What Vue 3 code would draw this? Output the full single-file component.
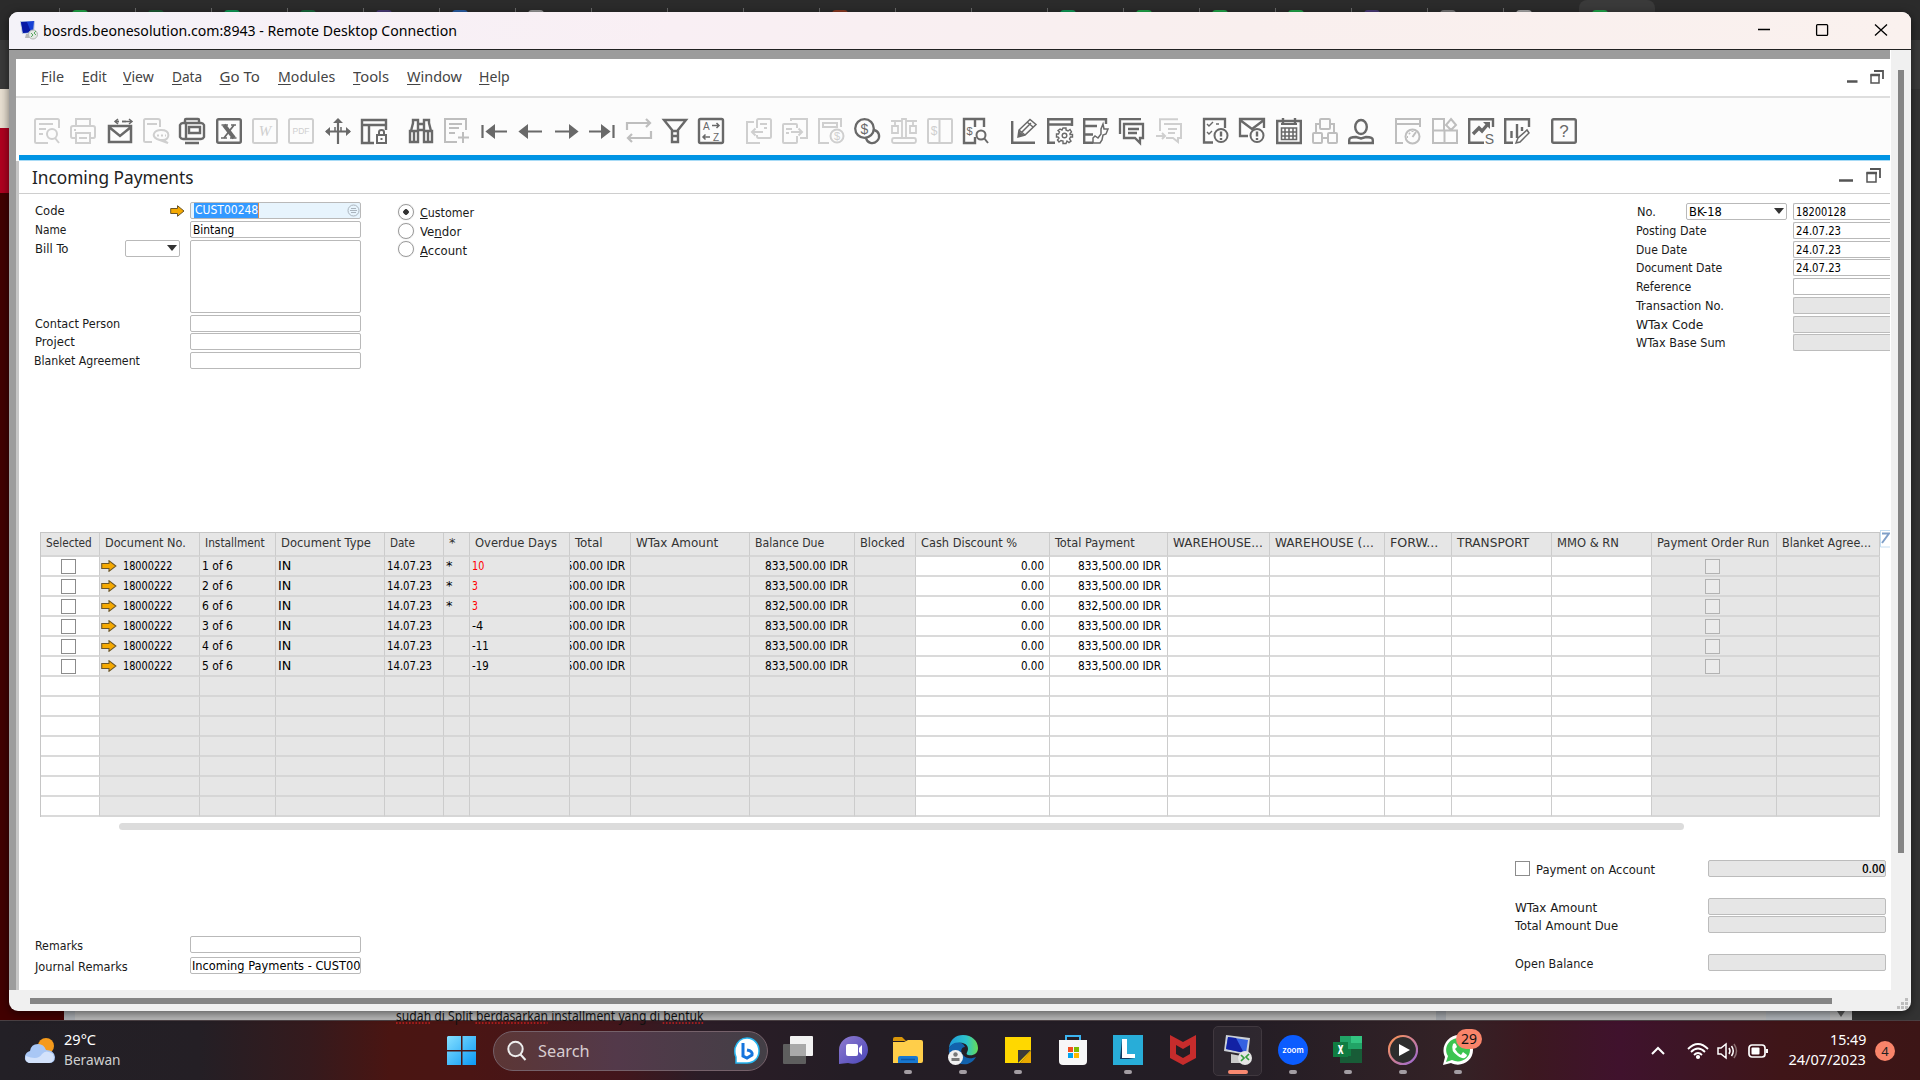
<script setup>
// Scales a label horizontally to the given width in px
const vFit = {
  mounted(el, { value, modifiers }) {
    const natural = el.offsetWidth
    if (!value || !natural) return
    el.style.transformOrigin = modifiers.right ? 'right center' : 'left center'
    el.style.transform = `scaleX(${value / natural})`
  },
}

const tabs = ['#20a84a', '#1c5c34', '#0f9d58', '#17693c', '#4b3a78', '#2a5fa8', '#9a9a9a', '', '', '', '#8c3a22', '', '', '#0f9d58', '#20a84a', '#20a84a', '#20a84a', '#4b3a78', '#777', '#aaa', '#20a84a']

const menus = [
  ['F', 'ile', 23, 41], ['E', 'dit', 25, 41], ['V', 'iew', 31, 48.5], ['D', 'ata', 30, 48], ['G', 'o To', 40, 58],
  ['M', 'odules', 57.5, 75], ['T', 'ools', 36.5, 54], ['W', 'indow', 55, 72.5], ['H', 'elp', 31, 40],
]

const toolGroups = [
  [
    [0, '<path d="M25 10V2.500Q25 1 23.500 1H2.500Q1 1 1 2.500V23.500Q1 25 2.500 25H14M5 6H19M5 11H12M5 16H9"/><circle cx="18" cy="16" r="5"/><path d="M21 20L25 25"/>'],
    [0, '<path d="M6 8V1H20V8M6 20H2.500Q1 20 1 18V10Q1 8 3 8H23Q25 8 25 10V18Q25 20 23.500 20H20M6 15H20V25H6ZM9 20H17M4 12H6"/>'],
    [1, '<path d="M2 8H24V24H2ZM2 9L13 18L24 9" stroke-width="2.500"/><path d="M8 3.500H12M15 3.500H19" stroke-width="1.500"/><path d="M8 3.500H12M11 1L8 3.500L11 6M15 3.500H25M22 1L25 3.500L22 6" stroke-width="1.500"/>'],
    [0, '<path d="M17 9V3Q17 1 15 1H2.500Q1 1 1 2.500V22.500Q1 24 2.500 24H9M4 6H14"/><path d="M18 12C28 12 27 22 20 22L25 25L14 21C8 18 11 12 18 12ZM14 17.500H16M18 17.500H20M22 17.500H23"/>'],
    [1, '<path d="M6 5V2Q6 1 7 1H19Q20 1 20 2V5M4 5H22Q24 5 25 7V19Q24 21 22 21H4Q2 21 1 19V7Q2 5 4 5ZM7 5V21M10 9H21V15H10ZM6 25H20" stroke-width="2.400"/>'],
    [1, '<rect x="1.200" y="1.200" width="23.600" height="23.600" rx="1.500" stroke-width="2.400"/><path d="M8 7L18 20" stroke-width="4"/><path d="M18 7L8 20" stroke-width="1.800"/><path d="M5.500 7H12M15 7H20M5 20H11M14 20H20.500" stroke-width="1.500"/>'],
    [0, '<rect x="1" y="1" width="24" height="24" rx="1.500"/><text x="13" y="18" text-anchor="middle" font-family="Liberation Serif,serif" font-style="italic" font-size="15" fill="currentColor" stroke="none">W</text>'],
    [0, '<rect x="1" y="1" width="24" height="24" rx="1.500"/><text x="13" y="16" text-anchor="middle" font-family="Liberation Sans,sans-serif" font-size="8.500" fill="currentColor" stroke="none">PDF</text>'],
    [1, '<path d="M13 1V26M1 13.500H25" stroke-width="2.200"/><path d="M8 5H18L13 0ZM5 9V18L0 13.500ZM21 9V18L26 13.500Z" fill="currentColor" stroke="none"/><path d="M10 14V9M16 14V9" stroke-width="1.500"/>'],
    [1, '<path d="M25 12V2H1V25H13M1 7H25M8 7V25" stroke-width="2.400"/><rect x="16" y="17" width="9" height="8"/><path d="M18 17V14Q18 12 20.500 12T23 14V17M20.500 20V22"/>'],
  ],
  [
    [1, '<path d="M3 13L5 5V2H10V13M23 13L21 5V2H16V13M10 6H16M10 12H16M2 13H10V24H2ZM16 13H24V24H16ZM6 13V24M20 13V24" stroke-width="2.400"/>'],
    [0.6, '<path d="M22 12V1H1V24H13M5 6H18M5 10H15M5 15H11M19 14V25M14 19.500H25"/>'],
    [1, '<path d="M1.500 7V20M7 13.500H26" stroke-width="2.200"/><path d="M6 13.500L13 8V19Z" fill="currentColor"/>'],
    [1, '<path d="M4 13.500H25" stroke-width="2.200"/><path d="M3 13.500L10 8V19Z" fill="currentColor"/>'],
    [1, '<path d="M2 13.500H22" stroke-width="2.200"/><path d="M24 13.500L17 8V19Z" fill="currentColor"/>'],
    [1, '<path d="M0 13.500H19M24.500 7V20" stroke-width="2.200"/><path d="M20 13.500L13 8V19Z" fill="currentColor"/>'],
    [0.6, '<path d="M1 12V5H24M20 1L24 5L20 9M25 13V20H2M6 16L2 20L6 24" stroke-width="2.200"/>'],
    [1, '<path d="M2 2H24L16 12V24H10V12ZM10 13H16M10 18H16" stroke-width="2.400"/>'],
    [1, '<rect x="1" y="1" width="24" height="24" rx="1.500" stroke-width="2.400"/><path d="M14 7.500H21M18.500 5L21 7.500L18.500 10M12 19H5M7.500 16.500L5 19L7.500 21.500" stroke-width="1.500"/><text x="5" y="12" font-family="Liberation Sans,sans-serif" font-size="10" fill="currentColor" stroke="none">A</text><text x="15" y="22.500" font-family="Liberation Sans,sans-serif" font-size="10" fill="currentColor" stroke="none">Z</text>'],
  ],
  [
    [0, '<path d="M8 4H1V25H14M11 10V2.500Q11 1 12.500 1H23.500Q25 1 25 2.500V18.500Q25 20 23.500 20H12.500Q11 20 11 18V17M14 6H21M18 10H21M6 14H17M9.500 10.500L6 14L9.500 17.500"/>'],
    [0, '<path d="M15 10V7Q15 6 14 6H2Q1 6 1 7V24Q1 25 2 25H14Q15 25 15 24V18M9 3V1H25V20H18M4 11H10M4 15H7M9 14H20M16.500 10.500L20 14L16.500 17.500"/>'],
    [0, '<path d="M23 9V1H1V25H11M5 5H19V9H5Z"/><circle cx="19" cy="18" r="6.500"/><text x="19" y="22" text-anchor="middle" font-family="Liberation Sans,sans-serif" font-size="11" fill="currentColor" stroke="none">$</text>'],
    [1, '<circle cx="10.500" cy="10.500" r="9.300" stroke-width="2.300"/><path d="M20 12C25 13 27 19 23 23C19 27 13 25 12 20" stroke-width="2.300"/><text x="10.500" y="15.500" text-anchor="middle" font-family="Liberation Sans,sans-serif" font-size="14" fill="currentColor" stroke="none">$</text>'],
    [0, '<path d="M0 3H11M15 3H26M4 3V8M22 3V8M1 8H7V15H1ZM19 8H25V15H19ZM11 20V1H15V20M3 20H23Q25 20 25 22.500T23 25H3Q1 25 1 22.500T3 20Z" stroke-width="1.800"/>'],
    [0, '<path d="M2 1H24Q25 1 25 2V24Q25 25 24 25H2Q1 25 1 24V2Q1 1 2 1ZM12.500 1V25"/><text x="7" y="17" text-anchor="middle" font-family="Liberation Sans,sans-serif" font-size="12" fill="currentColor" stroke="none">$</text>'],
    [1, '<path d="M21 9V1H1V25H12V19M12 1V9" stroke-width="2.400"/><circle cx="18" cy="17" r="4.500"/><path d="M21 20L25 25"/><text x="6.500" y="16.500" text-anchor="middle" font-family="Liberation Sans,sans-serif" font-size="11" fill="currentColor" stroke="none">$</text>'],
  ],
  [
    [1, '<path d="M1.200 3V24.800H24" stroke-width="2.400"/><path d="M7 19L8 12L19 1.500L25 6.500L14 17ZM8 12L14 17M16 4L22 9M11 14L20 5" stroke-width="1.500"/><path d="M7 19L8 13L13 17Z" fill="currentColor" stroke="none"/>'],
    [1, '<path d="M25 8V1.200H1.200V24.800H8M1 6.500H25" stroke-width="2.400"/><circle cx="17.500" cy="17.500" r="2.300" stroke-width="1.400"/><path d="M16 10H19V12L21 13L23 11.500L24.500 14L23 15.500V16.500H25.500V19H23.500L22.500 21L24 23L22 24.500L20 23L19 25.500H16V23L14 22.500L12 24L10.500 22L12 20L11 19H9.500V16H11.500L12.500 14L11 12.500L13 11L15 12Z" stroke-width="1.400"/>'],
    [1, '<path d="M23 6V1.200H1.200V24.800H10M1 8H14M1 16.500H10" stroke-width="2.400"/><path d="M10 25V20L12 18L15 20L18 16L18 11L20 6L21 11H25L23 16L20 17L19 22L17 25Z" stroke-width="1.500"/>'],
    [1, '<path d="M1 16V1.200H22M5 6H24V20H21V25L16 20H5ZM9 11H20M9 15H18" stroke-width="2.300"/>'],
    [0, '<path d="M4 13V1.200H22M8 6H25V20H22V24L17 20H10M12 11H21M12 15H19M0 18H9M6 15L9 18L6 21"/>'],
  ],
  [
    [1, '<path d="M22 10V1H1V24.500H10" stroke-width="2.300"/><path d="M4 6L6 8L10 4M4 14L6 16L9 13M13 6H16" stroke-width="1.400"/><circle cx="18" cy="17.500" r="6.500"/><path d="M18 13.500V18.500M18 20V22" stroke-width="2.400"/>'],
    [1, '<path d="M25 10V1H1V18H9M1 2L13 11L25 2" stroke-width="2.300"/><circle cx="18" cy="17.500" r="6.500"/><path d="M18 13.500V18.500M18 20V22" stroke-width="2.400"/>'],
    [1, '<path d="M1.200 3H24.800V25H1.200ZM7 0V5M19 0V5" stroke-width="2.400"/><path d="M5 6H21" stroke-width="2"/><path d="M5.500 10H20.500V21.500H5.500ZM5 14H21M5 18H21M9 10V22M13 10V22M17 10V22" stroke-width="1.600"/>'],
    [0.6, '<rect x="8" y="1" width="10" height="10" rx="1"/><rect x="1" y="15" width="9" height="10" rx="1"/><rect x="16" y="15" width="9" height="10" rx="1"/><path d="M8 6H4V15M18 6H22V15M10 20H16"/>'],
    [1, '<ellipse cx="13" cy="9" rx="5.800" ry="7" stroke-width="2.400"/><path d="M1.200 25V22Q1.200 19 8 19L13 20.500L18 19Q24.800 19 24.800 22V25Z" stroke-width="2.400"/>'],
  ],
  [
    [0.6, '<path d="M25 9V1H1V25H8M1 6H25"/><circle cx="17.500" cy="18.500" r="7"/><path d="M17.500 19L21 14M12 19H13M17.500 13V14M14 15L15 16"/>'],
    [0.6, '<path d="M1 1H12V12.500H1ZM1 12.500H12.500V25H1ZM12.500 12.500H25V25H12.500ZM19 1L24 7L19 12L14 7Z"/>'],
    [1, '<path d="M25 9V1.200H1.200V24.800H16" stroke-width="2.400"/><path d="M5 16L11 10L14 13L20 6" stroke-width="3.400"/><path d="M15 4H22V11Z" fill="currentColor" stroke="none"/><text x="21.500" y="25.500" text-anchor="middle" font-family="Liberation Sans,sans-serif" font-size="14" fill="currentColor" stroke="none">S</text>'],
    [1, '<path d="M25 9V1.200H1.200V24.800H9" stroke-width="2.400"/><path d="M7.500 13V20M13 6V20M18 9V13" stroke-width="2.400"/><path d="M12 25L14 20L23 12L25 15L16 24Z" stroke-width="1.500"/>'],
  ],
  [
    [1, '<rect x="1.200" y="1.200" width="23.600" height="23.600" rx="1.500" stroke-width="2.400"/><text x="13" y="19" text-anchor="middle" font-family="Liberation Sans,sans-serif" font-size="17" fill="currentColor" stroke="none">?</text>'],
  ],
]

// label, width, first grid row
const leftFields = [
  ['Code', 30, 1], ['Name', 31.5, 2], ['Bill To', 33.5, 3],
  ['Contact Person', 85.5, 7], ['Project', 40, 8], ['Blanket Agreement', 106, 9],
]
const parties = [['', 'C', 'ustomer', 53.5], ['Ve', 'n', 'dor', 41.5], ['', 'A', 'ccount', 47.5]]
const rightFields = [
  { label: 'No.', w: 19, value: '18200128', vw: 50 },
  { label: 'Posting Date', w: 70, value: '24.07.23', vw: 45 },
  { label: 'Due Date', w: 51, value: '24.07.23', vw: 45 },
  { label: 'Document Date', w: 86, value: '24.07.23', vw: 45 },
  { label: 'Reference', w: 55 },
  { label: 'Transaction No.', w: 88, off: true },
  { label: 'WTax Code', w: 67, off: true },
  { label: 'WTax Base Sum', w: 90, off: true },
]

const columns = [
  ['Selected', 46, 0], ['Document No.', 80.5, 1], ['Installment', 60, 1], ['Document Type', 90, 1], ['Date', 25, 1],
  ['*', 6, 1], ['Overdue Days', 81.5, 1], ['Total', 27.5, 1], ['WTax Amount', 82, 1], ['Balance Due', 69, 1],
  ['Blocked', 44.5, 1], ['Cash Discount %', 96, 0], ['Total Payment', 80, 0], ['WAREHOUSE...', 89.5, 0],
  ['WAREHOUSE (...', 99, 0], ['FORW...', 48, 0], ['TRANSPORT', 72, 0], ['MMO & RN', 62, 0],
  ['Payment Order Run', 112, 1], ['Blanket Agree...', 89, 1],
]
const payments = [
  ['1 of 6', '*', '10', 12.5, '833,500.00 IDR'], ['2 of 6', '*', '3', 6, '833,500.00 IDR'], ['6 of 6', '*', '3', 6, '832,500.00 IDR'],
  ['3 of 6', '', '-4', 11.5, '833,500.00 IDR'], ['4 of 6', '', '-11', 17, '833,500.00 IDR'], ['5 of 6', '', '-19', 17, '833,500.00 IDR'],
]
// Text and width of one grid cell, or null when it is empty
function cell(r, c) {
  const p = payments[r]
  if (!p) return null
  switch (c) {
    case 1: return ['18000222', 49.5]
    case 2: return [p[0], 31]
    case 3: return ['IN', 13]
    case 4: return ['14.07.23', 45]
    case 5: return p[1] ? ['*', 6] : null
    case 6: return [p[2], p[3]]
    case 7: case 9: case 12: return [p[4], 83]
    case 11: return ['0.00', 23]
    default: return null
  }
}
const isRight = (c) => [7, 9, 11, 12].includes(c)

const apps = [
  { name: 'task-view', svg: '<rect x="0" y="10" width="23" height="20" rx="1" fill="#5e5e5e"/><rect x="7" y="2" width="23" height="20" rx="1" fill="#f2f2f2"/><path d="M7 10H23V22H7Z" fill="#a9a9a9"/>' },
  { name: 'chat', svg: '<defs><linearGradient id="ch" x1="0" y1="0" x2="1" y2="1"><stop offset="0" stop-color="#8f7bd0"/><stop offset="1" stop-color="#4a46b8"/></linearGradient></defs><path d="M16 2C8 2 1 8 1 16L1 30L10 29C20 32 30 25 30 16C30 8 24 2 16 2Z" fill="url(#ch)"/><rect x="8" y="10" width="12" height="12" rx="2" fill="#fff"/><path d="M21 14L24 11V21L21 18Z" fill="#fff"/>' },
  { name: 'explorer', dot: 1, svg: '<path d="M0 5Q0 3 2 3H9L13 7H0Z" fill="#d9960a"/><path d="M0 8H11L15 6H28Q30 6 30 8V27Q30 29 28 29H0Z" fill="#ffce4a"/><path d="M5 29V24Q5 22 7 22H23Q25 22 25 24V29Z" fill="#1878d0"/><path d="M8 25.500H22" stroke="#0b57a8" stroke-width="1.500"/>' },
  { name: 'edge', dot: 1, svg: '<defs><linearGradient id="ed" x1="0" x2="1"><stop offset="0" stop-color="#1f9bdc"/><stop offset=".6" stop-color="#2dc3cb"/><stop offset="1" stop-color="#67dc55"/></linearGradient></defs><path d="M1 14C2 5 8 1 15 1C24 1 30 7 30 14C30 20 25 22 20 21C17 20 20 18 20 15C20 10 15 8 10 9C6 9 3 11 1 14Z" fill="url(#ed)"/><path d="M1 14C5 7 15 7 17 13C13 13 12 18 15 21C19 26 25 24 28 23C24 30 17 32 10 29C3 27 0 20 1 14Z" fill="#1262ad"/><circle cx="7.500" cy="23.500" r="7.500" fill="#f0f0f0"/><circle cx="7.500" cy="20.500" r="2.200" fill="#777"/><path d="M3.500 27V24H11.500V27Z" fill="#777"/>' },
  { name: 'notes', dot: 1, svg: '<path d="M2 3H28V17L17 29H2Z" fill="#ffd800"/><path d="M15 29V16H28Z" fill="#3b3a39"/><path d="M17 29L28 17V29Z" fill="#e8a800"/>' },
  { name: 'store', svg: '<path d="M8 8V2H22V8" fill="none" stroke="#3cb4f0" stroke-width="2"/><path d="M1 6H29V27Q29 31 25 31H5Q1 31 1 27Z" fill="#f7f7f7"/><path d="M10 13H15V18H10Z" fill="#f25022"/><path d="M16 13H21V18H16Z" fill="#7fba00"/><path d="M10 19H15V24H10Z" fill="#00a4ef"/><path d="M16 19H21V24H16Z" fill="#ffb900"/>' },
  { name: 'lingo', dot: 1, svg: '<rect x="0" y="1" width="30" height="30" fill="#28add8"/><path d="M9 5L7 25L22 25L9 23Z" fill="#103a5e"/><path d="M9 5H14V20H22V24H9Z" fill="#fff"/>' },
  { name: 'shield', svg: '<path d="M2 1L15 8L28 1V24L15 31L2 24Z" fill="#c62c2c"/><path d="M8 11L15 15L22 11V20L15 24L8 20Z" fill="#241d24"/>' },
  { name: 'remote', active: 1, svg: '<path d="M3 1L27 4L25 21L1 17Z" fill="#c9ced6"/><path d="M5 3L25 6L23 19L3 15Z" fill="#2a5ae0"/><path d="M5 3L13 4L21 19L3 15Z" fill="#0717a0"/><path d="M8 20L18 22L22 29H8Z" fill="#c8c8c8"/><circle cx="22" cy="24" r="7" fill="#e4e4e4"/><path d="M18 21L21 24L18 27M26 20L23 23L26 26" stroke="#2c9a35" stroke-width="1.700" fill="none"/>' },
  { name: 'zoom', dot: 1, svg: '<circle cx="15" cy="16" r="15" fill="#0b5cff"/><text x="15" y="18.500" text-anchor="middle" font-family="Inter,sans-serif" font-weight="600" font-size="8" fill="#fff">zoom</text>' },
  { name: 'sheet', dot: 1, svg: '<rect x="7" y="2" width="22" height="27" fill="#185c37"/><path d="M7 2H18V15H7Z" fill="#21a366"/><path d="M18 2H29V9H18Z" fill="#33c481"/><path d="M18 9H29V15H18Z" fill="#21a366"/><path d="M7 15H18V22H7Z" fill="#107c41"/><rect x="0" y="8" width="15" height="15" fill="#107c41"/><text x="7.500" y="20" text-anchor="middle" font-family="Open Sans,sans-serif" font-weight="700" font-size="12" fill="#fff">X</text>' },
  { name: 'player', dot: 1, svg: '<defs><linearGradient id="pl" x1="0" y1="0" x2="1" y2="1"><stop offset="0" stop-color="#ff9550"/><stop offset="1" stop-color="#9a68d8"/></linearGradient></defs><circle cx="15" cy="16" r="14" fill="#2d2d2d" stroke="url(#pl)" stroke-width="2.200"/><path d="M11 10L22 16L11 22Z" fill="#fff"/>' },
  { name: 'phone', dot: 1, badge: '29', svg: '<path d="M0 31L2 23C-3 13 5 1 16 1C24 1 30 8 30 16C30 27 18 34 8 29Z" fill="#fff"/><path d="M3 28L5 22C0 14 6 4 16 4C23 4 27 10 27 16C27 25 17 30 9 26Z" fill="#3cc451"/><path d="M10 10C12 8 13 10 14 13L12 15Q14 19 18 21L20 18L24 21C23 25 19 25 15 22Q7 17 10 10Z" fill="#fff"/>' },
]
</script>

<template>
  <div class="desktop">
    <div class="browser-tabs">
      <div v-for="(t, i) in tabs" :key="i" class="tab" :class="{ current: i === 20 }">
        <i :style="{ background: t || 'transparent' }"></i>
      </div>
    </div>
    <div class="browser-bar"></div>
    <div class="page-cream"></div>
    <div class="page-red"></div>
    <div class="page-dark"></div>
    <div class="word-strip">
      <div class="paper">
        <span v-fit="308" class="doc-text"><u>sudah</u> di Split <u>berdasarkan</u> installment yang di <u>bentuk</u></span>
        <b class="caret"></b>
      </div>
    </div>

    <footer class="taskbar">
      <div class="weather">
        <svg width="32" height="30" viewBox="0 0 32 30">
          <circle cx="22" cy="10" r="8" fill="#f59a1b" />
          <path d="M6 27Q0 26 1 20Q2 16 6 15Q7 8 14 8Q20 8 22 14Q30 14 31 21Q31 27 25 27Z" fill="#a9c7f5" />
          <path d="M5 27Q0 25 2 20Q14 25 18 18Q22 13 29 18Q32 26 25 27Z" fill="#d3e2fb" />
        </svg>
        <div class="forecast">
          <div><span v-fit="32">29°C</span></div>
          <div class="dim"><span v-fit="56.5">Berawan</span></div>
        </div>
      </div>
      <svg class="start" width="30" height="30" viewBox="0 0 30 30">
        <defs><linearGradient id="win" x1="0" y1="0" x2="1" y2="1"><stop offset="0" stop-color="#86e0ff" /><stop offset="1" stop-color="#0a98f5" /></linearGradient></defs>
        <path d="M1 0H14V14H0V1ZM15.500 0H29V14H15.500ZM0 15.500H14V29H0ZM15.500 15.500H29V29H15.500Z" fill="url(#win)" />
      </svg>
      <div class="search">
        <svg width="20" height="22" viewBox="0 0 20 22" fill="none" stroke="#eee" stroke-width="2"><circle cx="8.500" cy="9" r="7.200" fill="#6d5558" /><path d="M13.500 14.500L18.500 20" /></svg>
        <span v-fit="52">Search</span>
        <svg class="bing" width="26" height="28" viewBox="0 0 26 28"><path d="M13 1C20 1 25 7 25 14C25 21 20 26 13 26H2L2 20C0 16 1 13 1 11C3 5 7 1 13 1Z" fill="#fff" stroke="#25b4ee" stroke-width="1.500" /><path d="M9 6V19L13 21L18 18Q19 14 13 13" fill="none" stroke="#1675dd" stroke-width="3" /></svg>
      </div>
      <div class="apps">
        <div v-for="a in apps" :key="a.name" class="app" :class="{ active: a.active }">
          <svg width="30" height="32" viewBox="0 0 30 32" v-html="a.svg"></svg>
          <i v-if="a.dot || a.active" class="dot"></i>
          <span v-if="a.badge" class="count">{{ a.badge }}</span>
        </div>
      </div>
      <div class="tray">
        <svg width="16" height="12" viewBox="0 0 16 12" fill="none" stroke="#fff" stroke-width="2"><path d="M2 9L8 3L14 9" /></svg>
        <svg class="wifi" width="22" height="18" viewBox="0 0 22 18" fill="none" stroke="#fff" stroke-width="1.800"><path d="M1 7Q11 -3 21 7M4 10Q11 3 18 10M7 13Q11 9 15 13" /><circle cx="11" cy="15" r="1.200" fill="#fff" /></svg>
        <svg class="vol" width="21" height="18" viewBox="0 0 21 18" fill="none" stroke="#fff" stroke-width="1.500"><path d="M1 6H4L9 2V16L4 12H1ZM12 6Q14 9 12 12M14.500 4Q18 9 14.500 14" /><path d="M17 2Q22 9 17 16" stroke="#8a6f70" /></svg>
        <svg class="bat" width="21" height="14" viewBox="0 0 21 14"><rect x="1" y="1" width="16" height="12" rx="3" fill="none" stroke="#fff" stroke-width="1.700" /><rect x="3.500" y="3.500" width="8" height="7" rx="1" fill="#fff" /><path d="M18 5H20V9H18Z" fill="#fff" /></svg>
        <div class="clock">
          <div><span v-fit.right="36">15:49</span></div>
          <div><span v-fit.right="77.500">24/07/2023</span></div>
        </div>
        <span class="notif">4</span>
      </div>
    </footer>

    <section class="window">
      <header class="titlebar">
        <svg width="20" height="20" viewBox="0 0 20 20"><path d="M1 1L16 1L15 13L3 14Z" fill="#b9c4dc" /><path d="M2 2L15 1L14 12L4 13Z" fill="#1740d5" /><path d="M2 2L8 2L12 12L4 13Z" fill="#0718a5" /><path d="M7 14H12V18H6Z" fill="#b8b8b8" /><circle cx="14" cy="14.500" r="4.500" fill="#e4e8e4" stroke="#b0b4b0" /><path d="M12 13L14 15L12 17M17 11L15 13L17 15" stroke="#5aa862" fill="none" /></svg>
        <span v-fit="414" class="title">bosrds.beonesolution.com:8943 - Remote Desktop Connection</span>
        <svg class="controls" width="130" height="14" viewBox="0 0 130 14" fill="none" stroke="#000" stroke-width="1.300"><path d="M0 6.500H12M117 1.500L129 12.500M129 1.500L117 12.500" /><rect x="58.600" y="1.600" width="11" height="10.800" rx="1" /></svg>
      </header>
      <div class="session">
        <div class="screen">
          <div class="gray-top"></div>
          <nav class="menubar">
            <span v-for="m in menus" :key="m[1]" class="menu" :style="{ width: m[3] + 'px' }"><span v-fit="m[2]"><u>{{ m[0] }}</u>{{ m[1] }}</span></span>
            <svg class="mdi" width="37" height="14" viewBox="0 0 37 14" fill="none" stroke="#555"><path d="M0 11.500H10.500" stroke-width="2.500" /><path d="M27 1H36V9" stroke-width="1.800" /><path d="M24 5H32V13H24Z" stroke-width="1.500" /><path d="M23.500 5H33" stroke-width="2.500" /></svg>
          </nav>
          <div class="toolbar">
            <div v-for="(g, i) in toolGroups" :key="i" class="tools">
              <span v-for="(t, j) in g" :key="j" class="tool" :class="{ off: t[0] === 0, half: t[0] === 0.6 }"><svg width="26" height="26" viewBox="0 0 26 26" v-html="t[1]"></svg></span>
            </div>
          </div>
          <div class="blue-line"></div>
          <main class="form">
            <div class="form-title">
              <span v-fit="162">Incoming Payments</span>
              <svg class="mdi" width="43" height="15" viewBox="0 0 43 15" fill="none" stroke="#555"><path d="M0 12.500H14" stroke-width="2.500" /><path d="M31 1H41V10" stroke-width="1.800" /><path d="M28 5H37V14H28Z" stroke-width="1.500" /><path d="M27.500 5H38" stroke-width="2.500" /></svg>
            </div>
            <div class="header-fields">
              <div class="left-grid">
                <div v-for="(f, i) in leftFields" :key="f[0]" class="lrow" :style="{ gridRow: f[2] }">
                  <label :class="{ out: i === 5 }"><span v-fit="f[1]">{{ f[0] }}</span></label>
                  <div class="aux">
                    <svg v-if="i === 0" class="link" width="15" height="12" viewBox="0 0 15 12"><path d="M.700 3.500H7.500V.700L14 6L7.500 11.300V8.500H.700Z" fill="#f5a900" stroke="#6b5526" /></svg>
                    <div v-if="i === 2" class="combo small"><b></b></div>
                  </div>
                  <div v-if="i === 0" class="box focus"><span class="sel"><span v-fit="63">CUST00248</span></span><svg width="13" height="13" viewBox="0 0 13 13" fill="none" stroke="#aab4bd"><circle cx="6.500" cy="6.500" r="5.500" /><path d="M4 4.500H9M3 6.500H10M4 8.500H9" /></svg></div>
                  <div v-else-if="i === 2" class="box area"></div>
                  <div v-else class="box"><span v-if="i === 1" v-fit="41.500">Bintang</span></div>
                </div>
              </div>
              <div class="radios">
                <div v-for="(p, i) in parties" :key="i" class="radio"><i :class="{ on: i === 0 }"></i><span v-fit="p[3]">{{ p[0] }}<u>{{ p[1] }}</u>{{ p[2] }}</span></div>
              </div>
              <div class="right-fields">
                <div v-for="(f, i) in rightFields" :key="f.label" class="rrow">
                  <label><span v-fit="f.w">{{ f.label }}</span></label>
                  <div v-if="i === 0" class="combo"><span v-fit="33">BK-18</span><b></b></div>
                  <div class="box cut" :class="{ disabled: f.off }"><span v-if="f.value" v-fit="f.vw">{{ f.value }}</span></div>
                </div>
              </div>
            </div>
            <div class="matrix">
              <div class="grid">
                <div v-for="(c, i) in columns" :key="'h' + i" class="th"><span v-fit="c[1]">{{ c[0] }}</span></div>
                <template v-for="r in 13" :key="r">
                  <div v-for="(c, i) in columns" :key="r + '-' + i" class="td" :class="['c' + i, { gray: c[2], right: isRight(i), late: i === 6 && r < 4 }]">
                    <i v-if="(i === 0 || i === 18) && r <= 6" class="check" :class="{ dis: i === 18 }"></i>
                    <svg v-if="i === 1 && r <= 6" width="16" height="12" viewBox="0 0 15 12" preserveAspectRatio="none"><path d="M.700 3.500H7.500V.700L14 6L7.500 11.300V8.500H.700Z" fill="#f5a900" stroke="#6b5526" /></svg>
                    <span v-if="cell(r - 1, i) && isRight(i)" v-fit.right="cell(r - 1, i)[1]">{{ cell(r - 1, i)[0] }}</span>
                    <span v-else-if="cell(r - 1, i)" v-fit="cell(r - 1, i)[1]">{{ cell(r - 1, i)[0] }}</span>
                  </div>
                </template>
              </div>
              <svg class="expand" width="10" height="18" viewBox="0 0 10 18" fill="none"><path d="M0 .500H10M.500 0V17H10" stroke="#c3dcf0" /><path d="M2 3.500H9L2 13" stroke="#7f9fc8" stroke-width="2" /></svg>
            </div>
            <div class="hscroll"></div>
            <div class="bottom">
              <div class="remarks">
                <div class="brow"><label><span v-fit="48">Remarks</span></label><div class="box"></div></div>
                <div class="brow"><label><span v-fit="93">Journal Remarks</span></label><div class="box tight"><span v-fit="168">Incoming Payments - CUST00</span></div></div>
              </div>
              <div class="totals">
                <div class="trow"><i class="check"></i><label><span v-fit="119">Payment on Account</span></label><div class="box disabled amount"><span v-fit.right="23">0.00</span></div></div>
                <div class="trow gap"><label><span v-fit="82">WTax Amount</span></label><div class="box disabled"></div></div>
                <div class="trow"><label><span v-fit="103">Total Amount Due</span></label><div class="box disabled"></div></div>
                <div class="trow gap"><label><span v-fit="78">Open Balance</span></label><div class="box disabled"></div></div>
              </div>
            </div>
          </main>
        </div>
        <div class="vbar"><i></i></div>
      </div>
      <div class="hbar"><i></i>
        <svg width="12" height="12" viewBox="0 0 12 12" fill="#bdbdbd"><path d="M8 0H11V3H8ZM4 4H7V7H4ZM8 4H11V7H8ZM0 8H3V11H0ZM4 8H7V11H4ZM8 8H11V11H8Z" /></svg>
      </div>
    </section>
  </div>
</template>

<style>
body { margin: 0; background: #2b2b2b; overflow: hidden; }
</style>

<style scoped>
* { box-sizing: border-box; }
.desktop { position: relative; width: 1920px; height: 1080px; overflow: hidden; display: flex; flex-direction: column; font-family: "DejaVu Sans Condensed", "DejaVu Sans", sans-serif; font-stretch: condensed; font-size: 12px; color: #1a1a1a; background: linear-gradient(#2b2b2b 40px, #333 40px); }
.desktop span { display: inline-block; flex: none; white-space: nowrap; }

.browser-tabs { height: 40px; padding-left: 59px; display: flex; background: #2b2b2b; flex: none; }
.tab { width: 76px; height: 12px; flex: none; padding: 10px 0 0 13px; background: linear-gradient(#6a6a6a, #6a6a6a) 0 8px / 1px 4px no-repeat; }
.tab.current { background: #3a3a3a; border-radius: 8px 8px 0 0; }
.tab i { display: block; width: 16px; height: 4px; border-radius: 5px 5px 0 0; }
.browser-bar { height: 49px; background: #3a3a3a; flex: none; }
.page-cream { height: 39px; background: #e9e0d2; flex: none; }
.page-red { height: 65px; background: #b00020; flex: none; }
.page-dark { flex: 1; background: #420000; }
.page-cream, .page-red, .page-dark { width: 60px; }
.word-strip { height: 9px; flex: none; padding-left: 64px; background: linear-gradient(90deg, #420000 64px, #333 64px); }
.paper { width: 1788px; height: 9px; position: relative; padding-left: 332px; background: linear-gradient(90deg, #a9adb2 0 11px, #b6b6b6 11px 1372px, #a2a6ab 1372px 1382px, #b4b4b4 1382px 1702px, #aeb2b7 1702px 1766px, #b7b7b7 1766px); font-family: "Noto Sans", sans-serif; font-size: 15px; line-height: 9px; }
.doc-text { margin-top: -5px; line-height: 10px; color: #111; }
.doc-text u { text-decoration: underline dotted #c82020; text-underline-offset: 2px; }
.caret { position: absolute; right: 7px; top: 0; border: 4px solid transparent; border-top: 6px solid #555; }

.window { position: absolute; left: 9px; top: 12px; width: 1902px; height: 999px; border-radius: 9px; overflow: hidden; background: #f0f0f0; display: flex; flex-direction: column; box-shadow: 0 2px 10px #0008; }
.titlebar { height: 38px; flex: none; border-bottom: 1px solid #222; display: flex; align-items: center; padding: 0 23px 1px 10px; background: linear-gradient(90deg, #f4f2f8, #f9eff4 35%, #f9efee 65%, #faf1ee); font-family: "Noto Sans", sans-serif; font-size: 15px; color: #000; }
.title { margin-left: 4px; }
.controls { margin-left: auto; }
.session { display: flex; height: 940px; flex: none; }
.screen { width: 1881px; overflow: hidden; display: flex; flex-direction: column; background: #fff; border-left: 7px solid #9c9c9c; }
.gray-top { height: 9px; flex: none; background: #9c9c9c; }
.menubar { height: 39px; flex: none; border-bottom: 2px solid #dedede; display: flex; align-items: center; padding: 0 6px 4px 25px; font-family: "Noto Sans", sans-serif; font-size: 15px; color: #444; }
.menubar u { text-underline-offset: 2px; }
.mdi { margin-left: auto; margin-top: 3px; }
.toolbar { height: 57px; flex: none; display: flex; align-items: center; gap: 10.900px; padding-left: 13px; padding-top: 8px; background: #fcfcfc; }
.tools { display: flex; }
.desktop .tool { width: 36.300px; height: 26px; display: flex; justify-content: center; color: #696969; }
.tool svg { fill: none; stroke: currentColor; stroke-width: 2; overflow: visible; }
.desktop .tool.off { color: #cfcfcf; }
.desktop .tool.half { color: #bebebe; }
.blue-line { height: 6px; flex: none; margin-left: 3px; background: #0094e4; border-bottom: 1px solid #a8dbf6; }
.form { flex: 1; border-left: 3px solid #c6c6c6; background: #fff; display: flex; flex-direction: column; }
.form-title { height: 33px; flex: none; border-bottom: 1px solid #cecece; display: flex; align-items: center; padding: 0 8px 0 13px; font-family: "Noto Sans", sans-serif; font-size: 18px; color: #222; }
.form-title .mdi { margin-top: -4px; }

.header-fields { height: 338px; flex: none; display: flex; padding-top: 8px; }
.left-grid { display: grid; grid-template-rows: repeat(9, 18.750px); width: 359px; }
.lrow { display: grid; grid-template-columns: 104px 67px 171px; height: 18px; }
label { display: block; line-height: 19px; }
.lrow label { padding-left: 16px; }
.lrow label.out { padding-left: 15px; }
.aux { padding-left: 2px; }
.link { display: block; margin: 3px 0 0 45px; }
.box { height: 17px; border: 1px solid #b9b9b9; border-radius: 2px; background: #fff; overflow: hidden; padding-left: 2px; line-height: 16px; color: #000; }
.lrow .area { height: 73px; }
.box.tight { padding-left: 1px; }
.box.disabled { background: #e6e6e6; border-color: #bcbcbc; }
.focus { background: #e7f4fd; display: flex; justify-content: space-between; align-items: center; padding-left: 3px; }
.sel { width: 65px; height: 15px; line-height: 15px; background: #3399ff; color: #fff; border-right: 1px solid #d98a47; padding-left: 1px; }
.combo { width: 101px; height: 17px; border: 1px solid #b9b9b9; border-radius: 2px; display: flex; justify-content: space-between; line-height: 17px; padding: 0 2px 0 2px; background: #fff; color: #000; }
.combo.small { width: 55px; }
.combo b { margin: 4px 0 0 auto; border: 5px solid transparent; border-top: 6px solid #333; border-bottom: 0; height: 0; }
.radios { margin: 2px 0 0 20px; }
.radio { height: 18.750px; display: flex; align-items: center; gap: 6px; }
.radio i { width: 16px; height: 16px; border: 1.500px solid #999; border-radius: 50%; box-shadow: 0 0 1px #bbb; margin-top: -3px; }
.radio i.on { background: radial-gradient(#333 0 2.500px, #fff 3px); }
.right-fields { margin: 1px 0 0 auto; width: 254px; }
.rrow { height: 18.750px; display: flex; }
.rrow label { flex: 1; }
.rrow:first-child label { padding-left: 1px; }
.rrow .box { width: 97px; margin-left: 6px; border-right: 0; border-radius: 2px 0 0 2px; line-height: 17px; }

.matrix { height: 285px; flex: none; padding-left: 21px; display: flex; position: relative; }
.grid { width: 1840px; height: 285px; display: grid; grid-template-columns: 59px 100px 76px 109px 59px 26px 100px 61px 119px 105px 61px 134px 118px 102px 115px 67px 100px 100px 125px 103px; grid-template-rows: 24px; grid-auto-rows: 20px; border: 1px solid #c6c6c6; border-width: 1px 0 0 1px; background: #e6e6e6; }
.th { border-right: 1px solid #ccc; border-bottom: 2px solid #d6d6d6; padding-left: 5px; line-height: 21px; color: #333; overflow: hidden; }
.td { border-right: 1px solid #ccc; border-bottom: 2px solid #dadada; background: #fff; padding-left: 2px; line-height: 18px; overflow: hidden; color: #000; display: flex; align-items: center; min-width: 0; }
.td.gray { background: #e6e6e6; border-bottom-color: #d6d6d6; }
.td.right { justify-content: flex-end; padding-right: 5px; padding-left: 0; }
.td.c12, .td.c9 { padding-right: 6px; }
.td.late { color: #f00; }
.td.c0, .td.c18 { justify-content: center; padding: 0 3px 0 0; }
.td.c1 { padding-left: 1px; gap: 5.500px; }
.check { width: 15px; height: 15px; border: 1.500px solid #8c8c8c; background: #fff; flex: none; }
.check.dis { border-color: #b2b2b2; background: #ebebeb; }
.expand { position: absolute; right: 0; top: -2px; }
.hscroll { width: 1565px; height: 7px; flex: none; margin: 6px 0 0 100px; border-radius: 4px; background: #dcdcdc; }
.bottom { display: flex; justify-content: space-between; }
.remarks { padding: 106px 0 0 15.500px; }
.brow { height: 20.500px; display: flex; }
.brow label { width: 155.500px; line-height: 20px; }
.brow .box { width: 171px; }
.totals { padding-top: 30px; width: 375px; }
.trow { height: 18.750px; display: flex; align-items: flex-start; }
.trow.gap { margin-top: 18.750px; }
.trow .check { margin: 1px 6px 0 0; }
.trow label { flex: 1; line-height: 20px; }
.trow .box { width: 178px; margin-right: 4px; }
.amount { display: flex; justify-content: flex-end; line-height: 17px; text-shadow: .3px 0 #555; }
.vbar { width: 21px; border-left: 1px solid #fff; padding: 20px 0 0 7px; background: #f0f0f0; }
.vbar i { display: block; width: 6px; height: 783px; background: #858585; }
.hbar { flex: 1; display: flex; justify-content: space-between; padding: 8px 2px 0 21px; }
.hbar i { width: 1802px; height: 6px; background: #858585; }

.taskbar { height: 60px; flex: none; display: flex; align-items: center; border-top: 1px solid #4a4043; background: linear-gradient(90deg, #232026 0, #241f25 200px, #351a1d 310px, #4a1512 390px, #4a1514 470px, #42161c 620px, #2b1d27 700px, #241d25 850px, #231d25 1240px, #342226 1460px, #3c1820 1530px, #40122d 1620px, #3d1526 1680px, #3f1518 1780px, #3c1516 1920px); font-family: "Noto Sans", sans-serif; font-size: 15px; color: #fff; }
.weather { width: 447px; flex: none; display: flex; align-items: center; gap: 8px; padding-left: 24px; line-height: 20px; }
.forecast { margin-top: -4px; }
.dim { color: #cfcfcf; }
.start { flex: none; }
.search { margin-left: 16px; width: 275px; height: 40px; flex: none; border-radius: 20px; border: 1px solid #75616a; background: linear-gradient(90deg, #5c3635, #53394a 45%, #433f46); display: flex; align-items: center; padding: 0 7px 0 13px; gap: 11px; font-size: 16px; color: #d8cdd0; }
.bing { margin-left: auto; }
.apps { display: flex; margin-left: 2px; }
.app { width: 55px; height: 50px; flex: none; display: flex; flex-direction: column; align-items: center; padding-top: 8px; position: relative; }
.app svg { flex: none; }
.app.active::before { content: ""; position: absolute; inset: 0 3px; border: 1px solid #40383f; border-radius: 5px; background: #ffffff0c; }
.dot { width: 8px; height: 4px; border-radius: 2px; background: #a39da3; margin-top: 4px; }
.active .dot { width: 20px; background: #f9846a; }
.count { position: absolute; left: 26px; top: 3px; width: 26px; height: 20px; line-height: 20px; border-radius: 11px; background: #f9846a; color: #111; text-align: center; font-size: 14px; }
.tray { margin-left: auto; display: flex; align-items: center; padding-right: 25px; }
.wifi { margin-left: 21px; }
.vol { margin-left: 8px; }
.bat { margin-left: 10px; }
.clock { width: 97px; text-align: right; line-height: 20px; margin-top: -4px; }
.notif { width: 20px; height: 20px; line-height: 20px; margin-left: 9px; border-radius: 50%; background: #f9846a; color: #222; text-align: center; font-size: 13px; }
</style>
